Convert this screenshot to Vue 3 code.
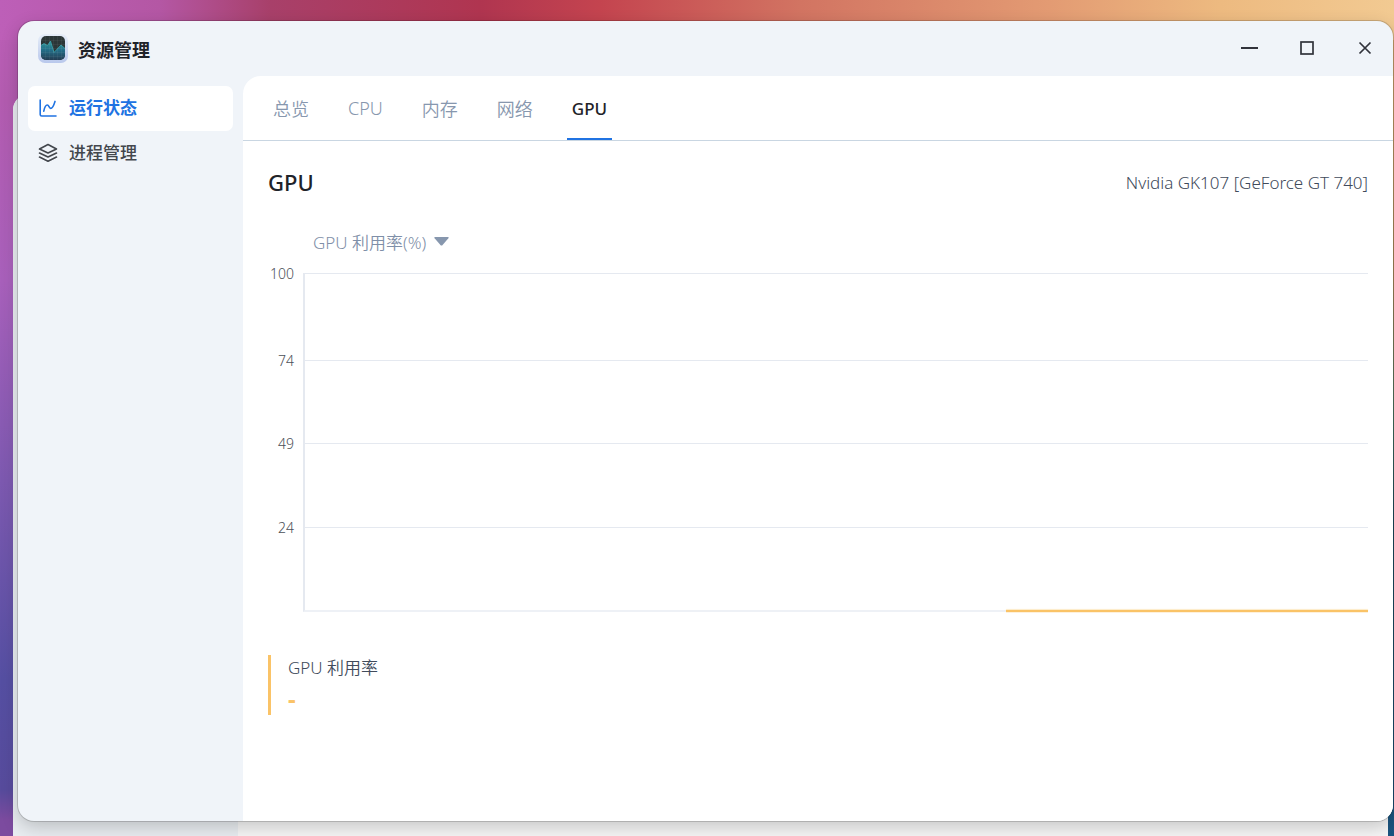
<script setup>
import { ref } from 'vue'

const tabs = ['总览', 'CPU', '内存', '网络', 'GPU']
const activeTab = ref('GPU')
const ticks = [100, 74, 49, 24]
</script>

<template>
  <div class="desktop">
    <div class="back-window" aria-hidden="true"><div class="back-side"></div></div>
    <div class="window">
      <header class="titlebar">
        <svg class="app-icon" width="30" height="30" viewBox="0 0 30 30" aria-hidden="true">
          <defs>
            <linearGradient id="rim" x1="0" y1="0" x2="0" y2="1">
              <stop offset="0" stop-color="#e6edf8" />
              <stop offset="1" stop-color="#b9c8ec" />
            </linearGradient>
            <linearGradient id="wave" x1="0" y1="0" x2="0" y2="1">
              <stop offset="0" stop-color="#2f9496" />
              <stop offset="0.5" stop-color="#236c86" />
              <stop offset="1" stop-color="#233c52" />
            </linearGradient>
            <clipPath id="face"><rect x="3" y="2" width="24" height="24" rx="5" /></clipPath>
          </defs>
          <rect width="30" height="29" rx="7" fill="url(#rim)" />
          <g clip-path="url(#face)">
            <rect x="3" y="2" width="24" height="24" fill="#2b3637" />
            <path d="M3 11.500 6 9.500l3.500 2L12.500 7 16 18.500l7-7.500 4 3.500V26H3z" fill="url(#wave)" />
            <path d="M3 11.500 6 9.500l3.500 2L12.500 7 16 18.500l7-7.500 4 3.500" fill="none" stroke="#38a3ac" stroke-width=".8" />
            <path d="M7.500 2v24M11.500 2v24M15.500 2v24M19.500 2v24M23.500 2v24M3 6.500h24M3 10.500h24M3 14.500h24M3 18.500h24M3 22.500h24" stroke="#fff" stroke-opacity=".05" />
          </g>
        </svg>
        <h1>资源管理</h1>
        <div class="controls">
          <button type="button" aria-label="最小化">
            <svg width="20" height="20" viewBox="0 0 20 20"><path d="M2 10h17" stroke-width="2" /></svg>
          </button>
          <button type="button" aria-label="最大化">
            <svg width="20" height="20" viewBox="0 0 20 20"><rect x="4" y="4" width="12" height="12" stroke-width="1.700" /></svg>
          </button>
          <button type="button" aria-label="关闭">
            <svg width="20" height="20" viewBox="0 0 20 20"><path d="m4.500 4.500 11 11m0-11-11 11" stroke-width="1.700" /></svg>
          </button>
        </div>
      </header>
      <div class="body">
        <nav class="sidebar">
          <a href="#status" class="active">
            <svg width="20" height="20" viewBox="0 0 20 20">
              <path d="M2.200 2v14.500q0 1.500 1.500 1.500H18" />
              <path d="M5.800 13.200c.8-4.200 2-6.200 3.500-6.200 1.800 0 1.600 3.400 3.400 3.400 2 0 3.200-3.400 4.300-7" />
            </svg>
            运行状态
          </a>
          <a href="#process">
            <svg width="20" height="20" viewBox="0 0 20 20">
              <path d="M10 1.500 18.500 6 10 10 1.500 6z" />
              <path d="M1.500 10 10 14l8.500-4M1.500 14 10 18.200l8.500-4.200" />
            </svg>
            进程管理
          </a>
        </nav>
        <main>
          <div class="tabs" role="tablist">
            <button
              v-for="tab in tabs"
              :key="tab"
              type="button"
              role="tab"
              :aria-selected="tab === activeTab"
              :class="{ active: tab === activeTab }"
              @click="activeTab = tab"
            >{{ tab }}</button>
          </div>
          <section class="panel">
            <div class="heading">
              <h2>GPU</h2>
              <span>Nvidia GK107 [GeForce GT 740]</span>
            </div>
            <button type="button" class="metric">
              GPU 利用率(%)
              <svg width="15" height="9" viewBox="0 0 15 9"><path d="M1 0h13q1.200.2.400 1.200L8.600 8q-1.100 1-2.200 0L.6 1.200Q-.2.200 1 0z" /></svg>
            </button>
            <div class="chart">
              <div v-for="tick in ticks" :key="tick" class="row">
                <span>{{ tick }}</span>
                <div class="cell"></div>
              </div>
              <div class="series"></div>
            </div>
            <div class="legend">
              <span>GPU 利用率</span>
              <strong>-</strong>
            </div>
          </section>
        </main>
      </div>
    </div>
  </div>
</template>

<style>
body {
  margin: 0;
}
</style>

<style scoped>
.desktop {
  box-sizing: border-box;
  position: relative;
  height: 100vh;
  padding: 21px 1px 15px 18px;
  overflow: hidden;
  font-family: "Noto Sans", "Noto Sans CJK SC", sans-serif;
  font-size: 18px;
  background:
    linear-gradient(90deg, #bd5fb8 0, #b457a4 160px, #a8406a 270px, #b03550 480px, #c4444f 600px, #d27462 800px, #e39b73 1050px, #edba80 1220px, #f2ca92 100%) top / 100% 40px no-repeat,
    linear-gradient(180deg, #bd5fb8 0, #b35cb0 100px, #a860bb 280px, #7d59b0 480px, #554fa2 680px, #574b9c 790px, #7c4b9f 820px) left / 40px 100% no-repeat,
    linear-gradient(180deg, #e8b77b 0, #b3925f 280px, #4a7c68 420px, #1e5064 520px, #1b5580 100%);
}
.back-window {
  position: absolute;
  top: 94px;
  left: 13px;
  right: 6px;
  bottom: 0;
  border-top-left-radius: 16px;
  background: #f6f6f6;
  overflow: hidden;
}
.back-side {
  width: 225px;
  height: 100%;
  background: #e9edf1;
}
.window {
  position: relative;
  display: flex;
  flex-direction: column;
  height: 100%;
  border-radius: 16px;
  background: #f0f4f9;
  overflow: hidden;
  box-shadow: 0 0 0 1px rgba(0, 0, 0, 0.16), 0 6px 18px rgba(0, 0, 0, 0.2);
}
h1,
h2 {
  margin: 0;
}
button {
  border: 0;
  padding: 0;
  background: none;
  font: inherit;
  cursor: pointer;
}
svg {
  flex: none;
}
.titlebar {
  display: flex;
  align-items: center;
  height: 55px;
  padding: 0 8px 0 20px;
  gap: 10px;
}
h1 {
  font-size: 18px;
  font-weight: 700;
  color: #1f2329;
}
.controls {
  display: flex;
  gap: 18px;
  margin: 0 0 2px auto;
}
.controls button {
  display: grid;
  place-items: center;
  width: 40px;
  height: 40px;
}
.controls svg {
  fill: none;
  stroke: #31333b;
}
.body {
  display: flex;
  flex: 1;
  min-height: 0;
}
.sidebar {
  box-sizing: border-box;
  width: 225px;
  padding: 10px;
}
.sidebar a {
  box-sizing: border-box;
  display: flex;
  align-items: center;
  gap: 11px;
  height: 45px;
  padding: 0 10px 1px;
  border-radius: 7px;
  color: #43474d;
  font-size: 17px;
  font-weight: 500;
  line-height: 24px;
  text-decoration: none;
}
.sidebar a.active {
  background: #fff;
  color: #2073e2;
  font-weight: 700;
}
.sidebar svg {
  fill: none;
  stroke: currentColor;
  stroke-width: 1.600;
  stroke-linecap: round;
  stroke-linejoin: round;
}
main {
  flex: 1;
  min-width: 0;
  border-top-left-radius: 18px;
  background: #fff;
}
.tabs {
  display: flex;
  gap: 29px;
  height: 64px;
  padding-left: 25px;
  border-bottom: 1px solid #c9d6e2;
}
.tabs button {
  padding: 2px 5px 0;
  border-bottom: 2px solid transparent;
  color: #8797ae;
  font-weight: 350;
}
.tabs button.active {
  border-color: #2073e2;
  color: #1f2329;
  font-size: 17px;
  font-weight: 500;
}
.panel {
  padding: 25px;
}
.heading {
  display: flex;
  justify-content: space-between;
  align-items: center;
  height: 32px;
}
h2 {
  font-size: 22px;
  font-weight: 500;
  line-height: 32px;
  color: #1f2329;
}
.heading span {
  color: #414b5b;
  font-size: 17px;
  font-weight: 350;
}
.metric {
  display: flex;
  align-items: center;
  gap: 8px;
  height: 30px;
  margin: 28px 0 17px 45px;
  color: #7f8fa8;
  font-size: 17px;
  font-weight: 350;
}
.metric svg {
  fill: #8797ae;
}
.chart {
  position: relative;
  display: grid;
  grid-template-rows: 87px 83px 84px 85px;
}
.row {
  display: flex;
}
.row span {
  width: 26px;
  margin: -9px 9px 0 0;
  font-size: 14px;
  font-weight: 350;
  line-height: 20px;
  text-align: right;
  color: #4b5058;
}
.cell {
  flex: 1;
  border-top: 1px solid #e5e9f0;
  border-left: 2px solid #e5e9f0;
}
.row:nth-child(4) .cell {
  border-bottom: 2px solid #eef1f6;
}
.series {
  position: absolute;
  right: 0;
  bottom: 0;
  width: calc((100% - 36px) * 0.34);
  height: 2px;
  background: #fac367;
  box-shadow: 0 -1px 1px #fdebc8, 0 1px 0 #fef1dc;
}
.legend {
  display: flex;
  flex-direction: column;
  gap: 4px;
  box-sizing: border-box;
  height: 60px;
  margin-top: 43px;
  padding-left: 17px;
  border-left: 3px solid #fac367;
}
.legend span {
  color: #414b5b;
  font-size: 17px;
  font-weight: 350;
  line-height: 26px;
}
.legend strong {
  color: #fac367;
  font-size: 24px;
  line-height: 28px;
}
</style>
